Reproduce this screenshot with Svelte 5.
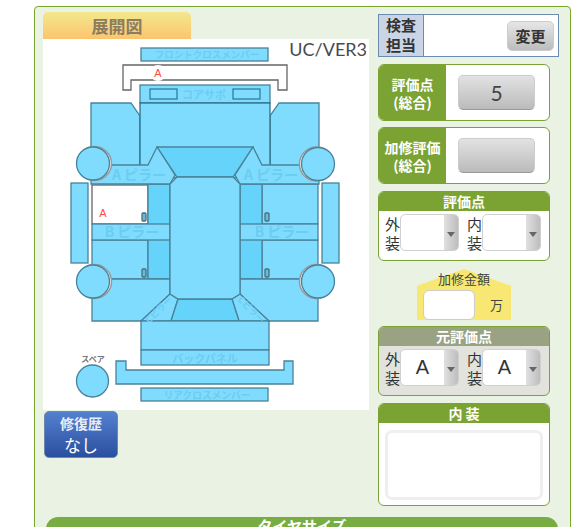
<script>
  const sills = [71, 322];
  const handles = [[142, 213], [142, 269], [265, 213], [265, 269]];
  // the pale ring sits on the side of the wheel facing the body
  const wheels = [[93, 163.5, 1.5], [318, 164, -1.5], [93, 281.5, 1.5], [318, 281.5, -1.5]];
</script>

<div class="page">
  <div class="panel">
    <div class="columns">
      <div class="left">
        <div class="tab">展開図</div>
        <div class="diagram">
          <span class="version">UC/VER3</span>
          <svg viewBox="43 39 326 371" width="326" height="371">
            <g class="part">
              <rect x="141" y="48" width="127" height="13" />
              <path class="blank" d="M123 65H287V90H278V80H131V90H123Z" />

              <path d="M91 103H131L140 116V166H91Z" />
              <path d="M319 103H279L270 116V166H319Z" />
              <rect x="140" y="85" width="130" height="18" />
              <rect class="inner" x="150" y="89" width="27" height="10" />
              <rect class="inner" x="233" y="89" width="27" height="10" />
              <rect class="hood" x="140" y="103" width="130" height="75" />

              <rect x="92" y="240" width="56" height="39" />
              <rect x="262" y="184" width="56" height="40" />
              <rect x="262" y="240" width="56" height="39" />
              <rect class="blank" x="92" y="185" width="56" height="39" />

              <rect class="dark" x="148" y="184" width="22" height="95" />
              <rect class="dark" x="240" y="184" width="22" height="95" />
              <rect x="92" y="224" width="78" height="16" />
              <rect x="240" y="224" width="78" height="16" />

              <path d="M92 279H170V294L141 321H92Z" />
              <path d="M318 279H240V294L269 321H318Z" />
              <path d="M170 294L178 299L171 321H141Z" />
              <path d="M240 294L232 299L239 321H269Z" />
              <path class="dark" d="M178 299H232L239 321H171Z" />

              <path class="dark" d="M157 147H253L233 177H177Z" />
              <path d="M91 165H148L157 147L175 175L170 184H91Z" />
              <path d="M319 165H262L253 147L235 175L240 184H319Z" />
              <path d="M177 177H233L240 184V294L232 299H178L170 294V184Z" />

              <rect x="141" y="321" width="128" height="29" />
              <rect x="141" y="350" width="128" height="15" />
              <path d="M116 361H126V370H284V361H293V384H116Z" />
              <rect x="141" y="388" width="127" height="13" />

              {#each sills as x}
                <rect {x} y="183" width="17" height="80" />
              {/each}
              {#each wheels as [cx, cy, dx]}
                <circle class="ring" cx={cx + dx} {cy} r="17" />
                <circle {cx} {cy} r="16.5" />
              {/each}
              <circle cx="92.5" cy="381" r="16" />
              {#each handles as [x, y]}
                <rect class="handle" {x} {y} width="4" height="8" rx="1" />
              {/each}
            </g>

            <circle class="halo" cx="158" cy="73" r="8" />
            <g class="label">
              <text x="207" y="58" font-size="9.5">フロントクロスメンバー</text>
              <text x="204" y="99" font-size="11">コアサポ</text>
              <text x="139" y="180" font-size="14">A ピラー</text>
              <text x="271" y="180" font-size="14">A ピラー</text>
              <text x="132" y="237" font-size="14">B ピラー</text>
              <text x="282" y="237" font-size="14">B ピラー</text>
              <text x="205" y="363" font-size="11">バックパネル</text>
              <text x="207" y="399" font-size="9.7">リアクロスメンバー</text>
              <text transform="translate(161 312) rotate(-45)" font-size="9">Cピラー</text>
              <text transform="translate(249 312) rotate(45)" font-size="9">Cピラー</text>
            </g>
            <text class="spare" x="93" y="362">スペア</text>
            <text class="mark" x="158" y="77">A</text>
            <text class="mark" x="103" y="217">A</text>
          </svg>
        </div>
        <button class="history">
          <b>修復歴</b>
          <span>なし</span>
        </button>
      </div>

      <div class="right">
        <div class="inspector">
          <div class="inspector-label">検査<br />担当</div>
          <div class="inspector-body"><button class="change">変更</button></div>
        </div>

        <div class="score">
          <div class="score-label">評価点<br />(総合)</div>
          <div class="score-body"><button class="score-btn">5</button></div>
        </div>
        <div class="score">
          <div class="score-label">加修評価<br />(総合)</div>
          <div class="score-body"><button class="score-btn"></button></div>
        </div>

        <div class="box">
          <div class="box-head">評価点</div>
          <div class="selects">
            <span class="sel-label">外<br />装</span>
            <div class="select"><span class="value"></span><span class="arrow"></span></div>
            <span class="sel-label">内<br />装</span>
            <div class="select"><span class="value"></span><span class="arrow"></span></div>
          </div>
        </div>

        <div class="amount">
          <div class="amount-title">加修金額</div>
          <div class="amount-row">
            <div class="amount-input"></div>
            <span>万</span>
          </div>
        </div>

        <div class="box original">
          <div class="box-head">元評価点</div>
          <div class="selects">
            <span class="sel-label">外<br />装</span>
            <div class="select"><span class="value">A</span><span class="arrow"></span></div>
            <span class="sel-label">内<br />装</span>
            <div class="select"><span class="value">A</span><span class="arrow"></span></div>
          </div>
        </div>

        <div class="box interior">
          <div class="box-head">内 装</div>
          <div class="textarea-wrap"><div class="textarea"></div></div>
        </div>
      </div>
    </div>

    <div class="tire">タイヤサイズ</div>
  </div>
</div>

<style>
  :global(body) {
    margin: 0;
    background: #fff;
    font-family: "Noto Sans CJK JP", "Liberation Sans", sans-serif;
  }

  .page {
    height: 527px;
    overflow: hidden;
    padding: 6px 10px 0 34px;
    box-sizing: border-box;
  }

  .panel {
    height: 600px;
    box-sizing: border-box;
    background: #eaf2e3;
    border: 1px solid #7aa82e;
    border-radius: 4px;
    padding: 5px 0 0 8px;
  }

  .columns {
    display: flex;
    gap: 9px;
    height: 505px;
  }

  .left {
    width: 326px;
  }

  .tab {
    width: 148px;
    height: 27px;
    line-height: 27px;
    text-align: center;
    font-size: 17px;
    font-weight: 700;
    color: #8a7c60;
    border-radius: 5px 5px 0 0;
    background: linear-gradient(#f3e88c, #fcc46e);
  }

  .diagram {
    position: relative;
    width: 326px;
    height: 371px;
    background: #fff;
  }

  .diagram svg {
    display: block;
  }

  .version {
    position: absolute;
    top: -2px;
    right: 2px;
    font-family: Lato, sans-serif;
    font-size: 18px;
    line-height: 24px;
    color: #4a4a4a;
  }

  .part :global(rect),
  .part :global(path),
  .part :global(circle) {
    fill: #7fdcff;
    stroke: #4a8298;
    stroke-width: 1.3;
  }

  .part .dark {
    fill: #66d4fa;
  }

  .part .hood {
    stroke: #2d6f86;
  }

  .part .blank {
    fill: #fff;
    stroke: #666;
  }

  .part .inner {
    stroke: #2f7f98;
  }

  .part .ring {
    fill: #fff;
    stroke: #999;
    stroke-width: 1.5;
  }

  .part .handle {
    fill: #66bcd8;
    stroke: #4a6f7c;
  }

  .halo {
    fill: #fff;
  }

  .label text {
    fill: #6bcdf0;
    font-weight: 700;
    text-anchor: middle;
  }

  .spare {
    fill: #777;
    font-size: 8px;
    font-weight: 700;
    text-anchor: middle;
  }

  .mark {
    fill: #ff4a4a;
    font-family: "Liberation Sans", sans-serif;
    font-size: 11px;
    text-anchor: middle;
  }

  .history {
    display: block;
    width: 74px;
    height: 47px;
    margin: 1px 0 0 1px;
    padding: 0;
    border: 1px solid #6f86ad;
    border-radius: 5px;
    color: #fff;
    background: linear-gradient(#5480d0, #2b4f9f);
    font-family: inherit;
  }

  .history b {
    display: block;
    font-size: 14px;
    line-height: 19px;
    color: #e8eef8;
  }

  .history span {
    display: block;
    font-size: 17px;
    line-height: 23px;
  }

  .right {
    width: 181px;
    padding-top: 2px;
  }

  .inspector {
    display: flex;
    height: 43px;
    box-sizing: border-box;
    border: 1px solid #6b8cb0;
    background: #fff;
  }

  .inspector-label {
    width: 44px;
    background: #c9d5e6;
    border-right: 1px solid #6b8cb0;
    text-align: center;
    font-size: 15px;
    font-weight: 700;
    line-height: 20px;
    color: #333;
  }

  .inspector-body {
    flex: 1;
    display: flex;
    justify-content: flex-end;
    align-items: center;
    padding-right: 4px;
  }

  .change {
    width: 47px;
    height: 30px;
    padding: 0;
    border: 1px solid #ccc;
    border-radius: 5px;
    background: linear-gradient(#e6e6e6, #bcbcbc);
    font-family: inherit;
    font-size: 15px;
    font-weight: 700;
    color: #333;
  }

  .score {
    display: flex;
    width: 172px;
    height: 57px;
    box-sizing: border-box;
    margin-top: 6px;
    border: 1px solid #7ba334;
    border-radius: 6px;
    background: #fff;
    overflow: hidden;
  }

  .inspector + .score {
    margin-top: 7px;
  }

  .score-label {
    width: 67px;
    display: flex;
    align-items: center;
    justify-content: center;
    text-align: center;
    background: #7ba334;
    color: #fff;
    font-size: 14px;
    font-weight: 700;
    line-height: 18px;
  }

  .score-body {
    flex: 1;
    display: flex;
    justify-content: center;
    align-items: center;
    padding-right: 2px;
  }

  .score-btn {
    width: 77px;
    height: 35px;
    padding: 0;
    border: 1px solid #ccc;
    border-bottom-color: #999;
    border-radius: 5px;
    background: linear-gradient(#e2e2e2, #bbb);
    font-family: Lato, sans-serif;
    font-size: 21px;
    color: #444;
  }

  .box {
    width: 172px;
    box-sizing: border-box;
    margin-top: 7px;
    border: 1px solid #7ba334;
    border-radius: 6px;
    background: #fff;
    overflow: hidden;
  }

  .box-head {
    height: 19px;
    line-height: 19px;
    text-align: center;
    background: #7ba334;
    color: #fff;
    font-size: 14px;
    font-weight: 700;
  }

  .selects {
    display: flex;
    align-items: flex-start;
    height: 49px;
    padding: 3px 0 0 6px;
    box-sizing: border-box;
  }

  .sel-label {
    width: 15px;
    font-size: 15px;
    line-height: 19px;
    color: #333;
  }

  .select {
    display: flex;
    width: 59px;
    height: 37px;
    box-sizing: border-box;
    margin-right: 8px;
    border: 1px solid #d0d0d0;
    border-radius: 5px;
    background: #fff;
    overflow: hidden;
  }

  .value {
    flex: 1;
    text-align: center;
    font-family: "Liberation Sans", sans-serif;
    font-size: 20px;
    line-height: 35px;
    color: #333;
  }

  .arrow {
    position: relative;
    width: 14px;
    background: linear-gradient(90deg, #e0e0e0, #bdbdbd);
  }

  .arrow::after {
    content: "";
    position: absolute;
    left: 3px;
    top: 17px;
    border: 4px solid transparent;
    border-top: 5px solid #666;
    border-bottom: 0;
  }

  .amount {
    position: relative;
    width: 94px;
    height: 51px;
    margin: 8px 0 6px 39px;
  }

  /* house shape goes behind so the title can stick out over its roof */
  .amount::before {
    content: "";
    position: absolute;
    inset: 0;
    background: #f8e873;
    clip-path: polygon(50% 0, 100% 33%, 100% 100%, 0 100%, 0 33%);
  }

  .amount-title {
    position: relative;
    height: 21px;
    text-align: center;
    font-size: 13px;
    line-height: 19px;
    color: #444;
  }

  .amount-row {
    position: relative;
    display: flex;
    align-items: center;
    gap: 15px;
    padding-left: 6px;
    font-size: 13px;
    line-height: 18px;
    color: #444;
  }

  .amount-input {
    width: 52px;
    height: 30px;
    box-sizing: border-box;
    border: 1px solid #ccc;
    border-radius: 6px;
    background: #fff;
  }

  .original {
    margin-top: 0;
    background: #e1e3dc;
  }

  .original .box-head {
    background: #9aa284;
  }

  .interior {
    height: 103px;
  }

  .textarea-wrap {
    padding: 7px 6px 0 6px;
  }

  .textarea {
    height: 70px;
    box-sizing: border-box;
    border: 3px solid #efefef;
    border-radius: 7px;
    background: #fff;
  }

  .tire {
    width: 512px;
    height: 40px;
    margin: 0 0 0 3px;
    border-radius: 12px 12px 0 0;
    background: #77ad42;
    color: #fff;
    text-align: center;
    font-size: 15px;
    font-weight: 700;
    line-height: 18px;
  }
</style>
